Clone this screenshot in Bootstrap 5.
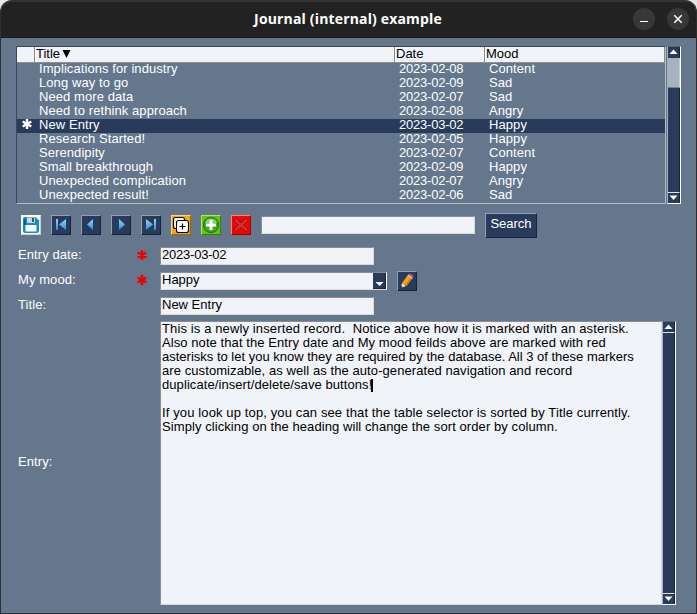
<!DOCTYPE html>
<html lang="en">
<head>
<meta charset="utf-8">
<title>Journal (internal) example</title>
<link href="https://cdn.jsdelivr.net/npm/bootstrap@5.3.0/dist/css/bootstrap.min.css" rel="stylesheet">
<style>
html{background:#e4e4e4}
body{background:linear-gradient(90deg,#e9e9e9,#e4e4e4);font:13px/14px "Liberation Sans",Arial,sans-serif;height:614px;overflow:hidden;color:#fff}
.win{width:697px;height:614px;border:1px solid #303030;border-top:0;border-right-color:#2b2b2b;border-radius:12px 12px 0 0;background:#64778d;overflow:hidden}
.titlebar{height:38px;background:#222;border-top:2px solid #333;border-bottom:1px solid #181818;padding:0 7px 1px 62px;border-radius:11px 11px 0 0}
.titlebar h1{font:bold 14px/20px "Open Sans","Noto Sans",sans-serif;letter-spacing:.16px}
.wbtn{width:22px;height:22px;border-radius:50%;background:#383838;border:0;padding:0;display:block}
.wbtn svg,.tool svg,.arr svg{display:block}
.list-area{margin:8px 0 0 15px;height:158px;gap:1px}
.grid-box{width:650px;border:1px solid;border-color:#3c4855 #b2bbc6 #b2bbc6 #3c4855}
.cols{display:grid;grid-template-columns:18px 360px 90px 180px}
.ghead{background:#f0f3f7;color:#000;height:16px;border-bottom:1px solid #909090}
.ghead>div{border-right:1px solid #8a8a8a;padding-left:1px;white-space:pre}
.ghead>div+div{box-shadow:inset 1px 0 #fff}
.ghead svg{margin-left:2px}
.grow{height:14px;line-height:12px;letter-spacing:.08px}
.grow>div{padding-left:4px;white-space:nowrap}
.grow>div:nth-child(3),.num{letter-spacing:-.22px}
.sel{background:#283b5b}
.vbar{width:14px;border:1px solid;border-color:#5a6470 #fff #fff #a4afbc;background:#283b5b}
.vbar .arr{height:11px;flex:none;border-right:1px solid #16233a}
.track{border-right:1px solid #16233a}
.thumb{height:30px;background:#a6b2be;border-right:1px solid #c3ccd4;border-bottom:1px solid #71808f}
.tools{margin:9px 0 0 20px;height:25px;gap:10px}
.tools>.tool{margin-top:-1px}
.tool{width:20px;height:20px;border:1px solid;border-color:#939fae #17233a #17233a #939fae;background:#283b5b;padding:0;border-radius:0}
.tool.save{background:#fff;border-color:#fff #d0cdc8 #d0cdc8 #fff}
.tool.dup{background:#ffa500;border-color:#ffd27f #9b6500 #9b6500 #ffd27f}
.tool.add{background:#5fc800;border-color:#afe37f #3c7d00 #3c7d00 #afe37f}
.tool.del{background:#f00;border-color:#ff7f7f #990000 #990000 #ff7f7f}
.field{width:214px;height:18px;border:1px solid;border-color:#8c8c8c #d9d9d9 #d9d9d9 #8c8c8c;background:#f0f3f7;color:#000;padding:0 0 0 1px;line-height:14px;white-space:nowrap}
.tools>.field{margin-top:-1px}
.go{width:52px;height:25px;border:1px solid;border-color:#939fae #17233a #17233a #939fae;background:#283b5b;color:#fff;padding:0 0 3px;font-size:13px;line-height:18px;border-radius:0}
.frm{margin:5px 0 0 17px}
.frow{height:25px}
.lab{width:118px;padding-bottom:2px;letter-spacing:.08px}
.req{width:24px;padding-bottom:2px}
.req svg,.star{display:block}
.combo{width:227px;border-right-color:#fff}
.drop{width:13px;height:16px;background:#283b5b;border-right:1px solid #17233a;border-bottom:1px solid #17233a}
.edit{margin-left:10px}
.memo-row{margin-top:3px}
.memo{width:502px;height:284px;white-space:pre}
.caret{display:inline-block;width:2px;height:13px;background:#000;vertical-align:top;margin:1px 0 -1px -1px}
.s1{letter-spacing:.125px}
.s2{letter-spacing:.08px}
</style>
<script src="https://cdn.jsdelivr.net/npm/bootstrap@5.3.0/dist/js/bootstrap.bundle.min.js"></script>
</head>
<body>
<div class="win d-flex flex-column">
  <header class="titlebar d-flex align-items-center flex-shrink-0">
    <h1 class="m-0 flex-grow-1 text-center">Journal (internal) example</h1>
    <div class="d-flex" style="gap:12px">
      <button class="wbtn" aria-label="Minimize"><svg width="22" height="22"><path d="M7 13.500h8" stroke="#fff"/></svg></button>
      <button class="wbtn" aria-label="Close"><svg width="22" height="22"><path d="M7.300 7.300l7.400 7.400M14.700 7.300l-7.400 7.400" stroke="#fff" stroke-width="1.500"/></svg></button>
    </div>
  </header>
  <section class="list-area d-flex flex-shrink-0">
    <div class="grid-box">
      <div class="cols ghead"><div></div><div class="d-flex">Title<svg width="9" height="14"><path d="M.500 3h8l-4 8z"/></svg></div><div>Date</div><div>Mood</div></div>
      <div class="cols grow"><div></div><div>Implications for industry</div><div>2023-02-08</div><div>Content</div></div>
      <div class="cols grow"><div></div><div>Long way to go</div><div>2023-02-09</div><div>Sad</div></div>
      <div class="cols grow"><div></div><div>Need more data</div><div>2023-02-07</div><div>Sad</div></div>
      <div class="cols grow"><div></div><div>Need to rethink approach</div><div>2023-02-08</div><div>Angry</div></div>
      <div class="cols grow sel"><div><svg class="star" width="11" height="12" viewBox="-1 0 11 12"><path d="M5 0v10M.7 2.500l8.600 5M.7 7.500l8.600-5" stroke="#fff" stroke-width="2.400"/></svg></div><div>New Entry</div><div>2023-03-02</div><div>Happy</div></div>
      <div class="cols grow"><div></div><div>Research Started!</div><div>2023-02-05</div><div>Happy</div></div>
      <div class="cols grow"><div></div><div>Serendipity</div><div>2023-02-07</div><div>Content</div></div>
      <div class="cols grow"><div></div><div>Small breakthrough</div><div>2023-02-09</div><div>Happy</div></div>
      <div class="cols grow"><div></div><div>Unexpected complication</div><div>2023-02-07</div><div>Angry</div></div>
      <div class="cols grow"><div></div><div>Unexpected result!</div><div>2023-02-06</div><div>Sad</div></div>
    </div>
    <div class="vbar d-flex flex-column">
      <div class="arr"><svg width="11" height="10"><path d="M1.500 7L5.500 2.500 9.500 7z" fill="#fff"/></svg></div>
      <div class="thumb"></div><div class="track flex-grow-1"></div>
      <div class="arr border-top"><svg width="11" height="10"><path d="M1.500 2.500h8L5.500 7z" fill="#fff"/></svg></div>
    </div>
  </section>
  <section class="tools d-flex align-items-center flex-shrink-0">
    <button class="tool save" aria-label="Save"><svg width="18" height="18"><path d="M1 2.500Q1 1 2.500 1h11L17 4.500v10Q17 17 14.500 17h-11Q1 17 1 14.500z" fill="#0792cb"/><path d="M2 3h2v6H2z" fill="#065f91"/><path d="M5 1.500h8V6q0 1-1 1H6Q5 7 5 6z" fill="#cfd5da"/><path d="M10 2h2v4h-2z" fill="#40505d"/><path d="M3.500 9h11v6.500h-11z" fill="#fff"/></svg></button>
    <button class="tool" aria-label="First"><svg width="18" height="18"><defs><linearGradient id="bl" x1="0" y1="0" x2="0" y2="1"><stop offset="0" stop-color="#9bd0f5"/><stop offset="1" stop-color="#2f8cd6"/></linearGradient></defs><path d="M4 3h2v11H4zM14 3v11L7 8.500z" fill="url(#bl)"/></svg></button>
    <button class="tool" aria-label="Previous"><svg width="18" height="18"><path d="M11 3v11L5 8.500z" fill="url(#bl)"/></svg></button>
    <button class="tool" aria-label="Next"><svg width="18" height="18"><path d="M7 3v11l6-5.500z" fill="url(#bl)"/></svg></button>
    <button class="tool" aria-label="Last"><svg width="18" height="18"><path d="M4 3v11l7-5.500zM12 3h2v11h-2z" fill="url(#bl)"/></svg></button>
    <button class="tool dup" aria-label="Duplicate"><svg width="18" height="18"><g fill="#fff" stroke="#000" stroke-width="1.100"><rect x="1.500" y="1.500" width="11" height="11" rx="2"/><rect x="4.500" y="4.500" width="12" height="12" rx="2"/></g><path d="M10.500 7.500v6M7.500 10.500h6" stroke="#000" stroke-width="1.200"/></svg></button>
    <button class="tool add" aria-label="Insert"><svg width="18" height="18"><circle cx="9" cy="9" r="7.500" fill="#43a52b" stroke="#23751c" stroke-width="1.200"/><path d="M3 7a6.300 6.300 0 0 1 12 0z" fill="#8bcf72"/><path d="M9 4v10M4 9h10" stroke="#fff" stroke-width="3"/></svg></button>
    <button class="tool del" aria-label="Delete"><svg width="18" height="18"><path d="M2.500 3l13 12M15.500 3l-13 12" stroke="#8a1212" stroke-width="4.400"/><path d="M3 3.500l12 11M15 3.500l-12 11" stroke="#d8302c" stroke-width="2.400"/></svg></button>
    <div class="field"></div>
    <button class="go">Search</button>
  </section>
  <section class="frm flex-shrink-0">
    <div class="frow d-flex align-items-center"><div class="lab">Entry date:</div><div class="req"><svg width="12" height="12" viewBox="-1 -1 12 12"><path d="M5 0v10M.7 2.500l8.600 5M.7 7.500l8.600-5" stroke="#f00000" stroke-width="2.400"/></svg></div><div class="field num">2023-03-02</div></div>
    <div class="frow d-flex align-items-center"><div class="lab">My mood:</div><div class="req"><svg width="12" height="12" viewBox="-1 -1 12 12"><path d="M5 0v10M.7 2.500l8.600 5M.7 7.500l8.600-5" stroke="#f00000" stroke-width="2.400"/></svg></div>
      <div class="field combo d-flex justify-content-between"><span>Happy</span><span class="drop"><svg class="d-block" width="12" height="15"><path d="M2.500 9h8l-4 4z" fill="#fff"/></svg></span></div>
      <button class="tool edit" aria-label="Edit mood"><svg width="18" height="18"><path d="M3 16l1-5 4 3z" fill="#f4e8d8"/><path d="M3 16l.4-2 1.500 1z" fill="#111"/><path d="M4 11L9.500 3.500l4.500 3.200L8.500 14z" fill="#f5a31c"/><path d="M8.500 14L14 6.700l-1.500-1-5.500 7.300z" fill="#cf7d0c"/><path d="M9.500 3.500l.8-1 4.500 3.200-.8 1z" fill="#d5e0e8"/><path d="M10.300 2.500q1-1.700 3-.6l1.500 1.200q1 1 0 2.600z" fill="#e3434b"/></svg></button>
    </div>
    <div class="frow d-flex align-items-center"><div class="lab">Title:</div><div class="req"></div><div class="field">New Entry</div></div>
    <div class="memo-row d-flex align-items-center"><div class="lab">Entry:</div><div class="req"></div>
      <div class="d-flex"><div class="field memo"><span class="s1">This is a newly inserted record.  Notice above how it is marked with an asterisk.</span>
<span class="s2">Also note that the Entry date and My mood feilds above are marked with red</span>
<span>asterisks to let you know they are required by the database. All 3 of these markers</span>
<span class="s2">are customizable, as well as the auto-generated navigation and record</span>
<span class="s2">duplicate/insert/delete/save buttons!</span><span class="caret"></span>

<span class="s1">If you look up top, you can see that the table selector is sorted by Title currently.</span>
<span class="s2">Simply clicking on the heading will change the sort order by column.</span></div>
      <div class="vbar d-flex flex-column"><div class="arr border-bottom"><svg width="11" height="9"><path d="M1.500 7L5.500 2.500 9.500 7z" fill="#fff"/></svg></div><div class="track flex-grow-1"></div><div class="arr border-top"><svg width="11" height="9"><path d="M1.500 2.500h8L5.500 7z" fill="#fff"/></svg></div></div></div>
    </div>
  </section>
</div>
</body>
</html>
